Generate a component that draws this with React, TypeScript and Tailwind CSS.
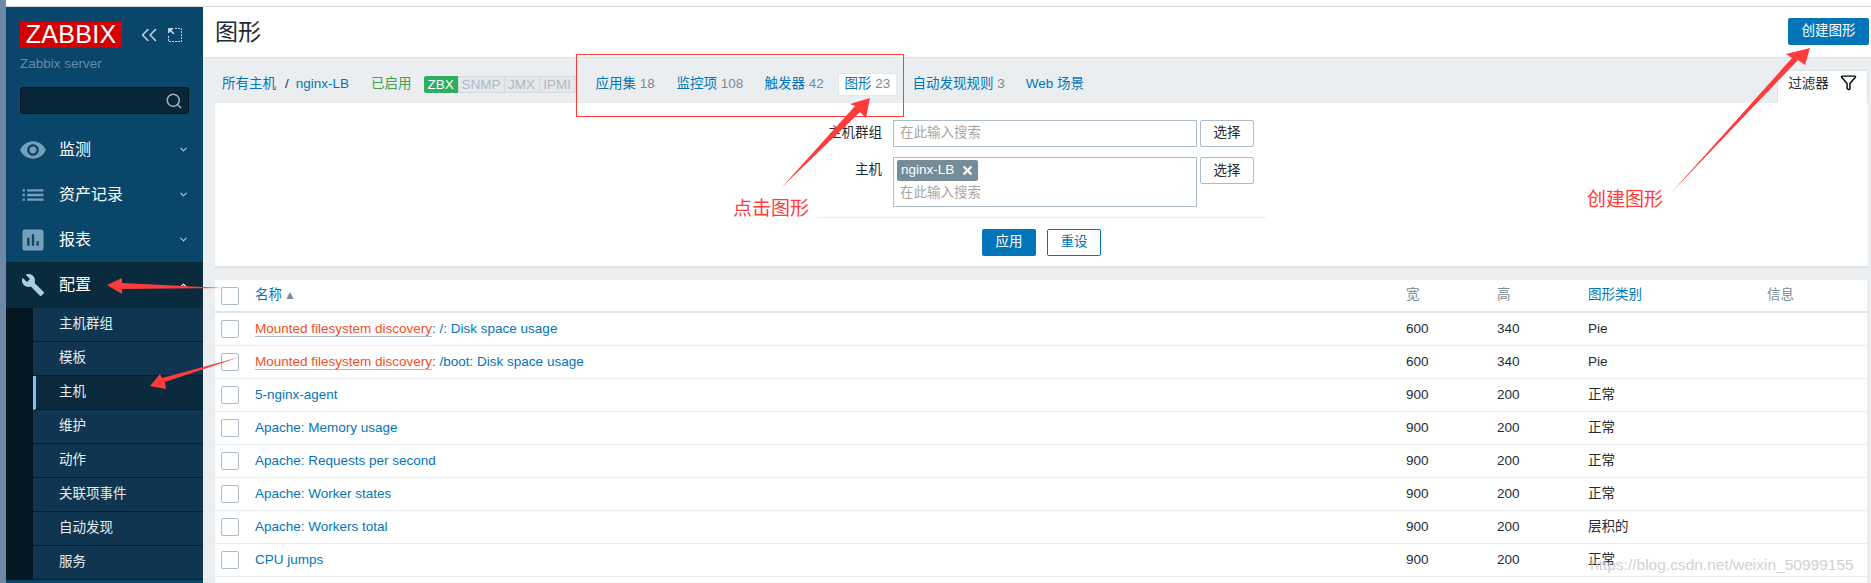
import { ChevronDown, ChevronUp, ChevronsLeft, Filter, Search, X } from 'lucide-react';

const menu = [
  { label: '监测', d: 'M12 4.5C7 4.5 2.73 7.61 1 12c1.73 4.39 6 7.5 11 7.5s9.27-3.11 11-7.5c-1.73-4.39-6-7.5-11-7.5zM12 17c-2.76 0-5-2.24-5-5s2.24-5 5-5 5 2.24 5 5-2.24 5-5 5zm0-8c-1.66 0-3 1.34-3 3s1.34 3 3 3 3-1.34 3-3-1.34-3-3-3z' },
  { label: '资产记录', d: 'M3 13h2v-2H3v2zm0 4h2v-2H3v2zm0-8h2V7H3v2zm4 4h14v-2H7v2zm0 4h14v-2H7v2zM7 7v2h14V7H7z' },
  { label: '报表', d: 'M19 3H5c-1.1 0-2 .9-2 2v14c0 1.1.9 2 2 2h14c1.1 0 2-.9 2-2V5c0-1.1-.9-2-2-2zM9 17H7v-7h2v7zm4 0h-2V7h2v10zm4 0h-2v-4h2v4z' },
];

const subMenu = ['主机群组', '模板', '主机', '维护', '动作', '关联项事件', '自动发现', '服务'];

const tabs = [
  { label: '应用集', count: '18', w: 'w-[81px]' },
  { label: '监控项', count: '108', w: 'w-[88px]' },
  { label: '触发器', count: '42', w: 'w-[74px]' },
];

const rows = [
  { prefix: 'Mounted filesystem discovery', name: ': /: Disk space usage', w: '600', h: '340', type: 'Pie' },
  { prefix: 'Mounted filesystem discovery', name: ': /boot: Disk space usage', w: '600', h: '340', type: 'Pie' },
  { name: '5-nginx-agent', w: '900', h: '200', type: '正常' },
  { name: 'Apache: Memory usage', w: '900', h: '200', type: '正常' },
  { name: 'Apache: Requests per second', w: '900', h: '200', type: '正常' },
  { name: 'Apache: Worker states', w: '900', h: '200', type: '正常' },
  { name: 'Apache: Workers total', w: '900', h: '200', type: '层积的' },
  { name: 'CPU jumps', w: '900', h: '200', type: '正常' },
];

const Icon = ({ d, className }: { d: string; className: string }) => (
  <svg viewBox="0 0 24 24" className={className} fill="currentColor">
    <path d={d} />
  </svg>
);

const Checkbox = () => <span className="h-[18px] w-[18px] shrink-0 rounded-[2px] border border-[#acbbc7] bg-white" />;

const Sidebar = () => (
  <aside className="flex h-full w-[197px] shrink-0 flex-col bg-[#0a466a]">
    <div className="flex items-center pl-[14px] pt-[14px]">
      <div className="flex h-[27px] w-[102px] items-center justify-center bg-[#d40000] text-[25px] leading-none tracking-[0.3px] text-white">ZABBIX</div>
      <ChevronsLeft size={26} strokeWidth={1.4} className="ml-[14px] text-[#c4d4de]" />
      <svg viewBox="0 0 14 14" className="ml-[6px] h-[14px] w-[14px] text-[#c4d4de]" fill="none" stroke="currentColor">
        <path d="M7 .5h6.5v13H.5V7" strokeDasharray="2 1" />
        <path d="M1 1l5 5" strokeWidth="1.6" />
        <path d="M.5.5h4.5L.5 5z" fill="currentColor" />
      </svg>
    </div>
    <div className="pl-[14px] pt-[7px] text-[13.5px] leading-[17px] text-[#668aa1]">Zabbix server</div>
    <div className="ml-[14px] mt-[15px] flex h-[27px] w-[169px] items-center justify-end rounded-[3px] border border-[#021722] bg-[#082637] pr-[5px]">
      <Search size={18} className="text-[#9db5c4]" />
    </div>
    <nav className="mt-[13px]">
      {menu.map((m) => (
        <div key={m.label} className="flex h-[45px] items-center text-[16px] text-white">
          <span className="flex w-[53px] justify-center">
            <Icon d={m.d} className="h-[28px] w-[28px] text-[#76a0ba]" />
          </span>
          <span>{m.label}</span>
          <ChevronDown size={11} strokeWidth={2.5} className="ml-auto mr-[14px] text-[#b4c8d4]" />
        </div>
      ))}
      <div className="flex h-[46px] items-center bg-[#0a2b3e] text-[16px] text-white">
        <span className="flex w-[53px] justify-center">
          <Icon d="M22.7 19l-9.1-9.1c.9-2.3.4-5-1.5-6.9-2-2-5-2.4-7.4-1.3L9 6 6 9 1.6 4.7C.4 7.1.9 10.1 2.9 12.1c1.9 1.9 4.6 2.4 6.9 1.5l9.1 9.1c.4.4 1 .4 1.4 0l2.3-2.3c.5-.4.5-1.1.1-1.4z" className="h-[24px] w-[24px] text-[#a9d0e6]" />
        </span>
        <span>配置</span>
        <ChevronUp size={11} strokeWidth={2.5} className="ml-auto mr-[14px] text-white" />
      </div>
      <div className="bg-[#041722] pl-[27px]">
        {subMenu.map((s) => (
          <div
            key={s}
            className={`flex h-[34px] items-center border-b border-[#061f2e] text-[13.5px] text-[#e4edf2] ${
              s === '主机' ? 'border-l-[3px] bg-[#0a2b3e] pl-[23px] [border-left-color:#7fc4f0]' : 'bg-[#0f3550] pl-[26px]'
            }`}
          >
            {s}
          </div>
        ))}
      </div>
    </nav>
  </aside>
);

const FilterPanel = () => (
  <div className="mr-[3px] ml-[12px] h-[165px] shrink-0 border-b-2 border-[#dfe4e7] bg-white pt-[17px] text-[13.5px] text-[#1f2c33]">
    <div className="flex">
      <div className="w-[667px] pt-[3px] text-right leading-[20px]">主机群组</div>
      <div className="ml-[11px] flex h-[27px] w-[304px] items-center border border-[#acbbc7] px-[6px] text-[#a6a6a6]">在此输入搜索</div>
      <button className="ml-[3px] h-[27px] w-[54px] rounded-[2px] border border-[#acbbc7] bg-white">选择</button>
    </div>
    <div className="mt-[10px] flex">
      <div className="w-[667px] pt-[3px] text-right leading-[20px]">主机</div>
      <div className="ml-[11px] h-[50px] w-[304px] border border-[#acbbc7] px-[3px] pt-[2px]">
        <div className="flex h-[21px] w-[81px] items-center rounded-[2px] bg-[#768d99] pl-[4px] text-white">
          nginx-LB
          <X size={13} strokeWidth={4.5} className="ml-[7px]" />
        </div>
        <div className="pl-[3px] pt-[4px] leading-[16px] text-[#a6a6a6]">在此输入搜索</div>
      </div>
      <button className="ml-[3px] h-[27px] w-[54px] rounded-[2px] border border-[#acbbc7] bg-white pt-[2px]">选择</button>
    </div>
    <div className="ml-[602px] mt-[10px] w-[449px] border-t border-[#ebeef0]" />
    <div className="ml-[767px] mt-[11px] flex gap-[11px]">
      <button className="h-[27px] w-[54px] rounded-[2px] bg-[#0275b8] text-white">应用</button>
      <button className="h-[27px] w-[54px] rounded-[2px] border border-[#0275b8] bg-white text-[#0275b8]">重设</button>
    </div>
  </div>
);

const GraphTable = () => (
  <div className="ml-[12px] mr-[4px] mt-[12px] flex-1 bg-white text-[13.5px]">
    <div className="flex h-[33px] items-center border-b-2 border-[#dfe4e7] pl-[6px] text-[#768d99]">
      <Checkbox />
      <span className="ml-[16px] w-[1151px] text-[#0275b8]">
        名称<span className="ml-[2px] text-[12px] text-[#768d99]">▲</span>
      </span>
      <span className="w-[91px]">宽</span>
      <span className="w-[91px]">高</span>
      <span className="w-[179px] text-[#0275b8]">图形类别</span>
      <span>信息</span>
    </div>
    {rows.map((r, i) => (
      <div key={i} className="flex h-[33px] items-center border-b border-[#ebeef0] pl-[6px] text-[#1f2c33]">
        <Checkbox />
        <span className="ml-[16px] w-[1151px] text-[#0275b8]">
          {r.prefix && <span className="border-b border-[#acbbc7] text-[#f24f1d]">{r.prefix}</span>}
          {r.name}
        </span>
        <span className="w-[91px]">{r.w}</span>
        <span className="w-[91px]">{r.h}</span>
        <span>{r.type}</span>
      </div>
    ))}
  </div>
);

const Annotations = () => (
  <div className="pointer-events-none absolute inset-0">
    <svg width="1871" height="583" className="absolute left-0 top-0" fill="#ff3b3b">
      <polygon points="107,285 122,278 122,283 223,288 122,289 122,294" />
      <polygon points="150,386 160,374 162,378 240,357 165,382 166,389" />
      <polygon points="870,98 866,118 860,112 782,187 855,106 850,104" />
      <polygon points="1810,48 1805,65 1798,60 1671,193 1792,58 1786,54" />
    </svg>
    <div className="absolute left-[576px] top-[54px] h-[63px] w-[328px] border border-[#ff3b3b]" />
    <div className="absolute left-[733px] top-[197px] text-[19px] leading-[24px] text-[#ff3b3b]">点击图形</div>
    <div className="absolute left-[1587px] top-[188px] text-[19px] leading-[24px] text-[#ff3b3b]">创建图形</div>
    <div className="absolute left-[1590px] top-[555px] text-[15.5px] leading-[20px] text-[#c4c4c4]/80">https://blog.csdn.net/weixin_50999155</div>
  </div>
);

export default function App() {
  return (
    <div className="relative flex h-[583px] w-[1871px] overflow-hidden bg-white font-['Liberation_Sans','Noto_Sans_CJK_SC',sans-serif]">
      <div className="w-[6px] shrink-0 bg-[#6f88a5]" />
      <div className="flex min-w-0 flex-1 flex-col">
        <div className="h-[7px] shrink-0 border-b border-[#d8dbdd] bg-white" />
        <div className="flex min-h-0 flex-1">
          <Sidebar />
          <main className="flex min-w-0 flex-1 flex-col bg-[#ebeef0]">
            <header className="flex h-[51px] shrink-0 items-center justify-between border-b border-[#dfe4e7] bg-white pl-[12px] pr-[2px]">
              <h1 className="text-[23px] font-normal text-[#1f2c33]">图形</h1>
              <button className="mb-[1px] h-[27px] w-[81px] rounded-[2px] bg-[#0275b8] text-[13.5px] text-white">创建图形</button>
            </header>
            <div className="flex h-[45px] shrink-0 items-center pl-[19px] pt-[7px] text-[13.5px] text-[#0275b8]">
              <span>所有主机</span>
              <span className="ml-[9px] text-[#1f2c33]">/</span>
              <span className="ml-[7px]">nginx-LB</span>
              <span className="ml-[22px] text-[#429e47]">已启用</span>
              <span className="ml-[12px] flex h-[17px] w-[152px] text-[13.5px] leading-[17px] text-[#acbbc7]">
                <span className="w-[34px] rounded-l-[2px] bg-[#2fae60] text-center text-white">ZBX</span>
                <span className="w-[47px] border border-[#d5dadd] bg-[#e4e8ea] text-center leading-[15px]">SNMP</span>
                <span className="w-[35px] border-y border-r border-[#d5dadd] bg-[#e4e8ea] text-center leading-[15px]">JMX</span>
                <span className="w-[36px] border-y border-r border-[#d5dadd] bg-[#e4e8ea] text-center leading-[15px]">IPMI</span>
              </span>
              <span className="ml-[20px] flex">
                {tabs.map((t) => (
                  <span key={t.label} className={t.w}>
                    {t.label} <span className="text-[#768d99]">{t.count}</span>
                  </span>
                ))}
              </span>
              <span className="ml-[-1px] flex h-[23px] w-[59px] items-center rounded-[2px] border border-[#e3e7ea] bg-white pl-[6px]">
                图形&nbsp;<span className="text-[#768d99]">23</span>
              </span>
              <span className="ml-[16px]">
                自动发现规则 <span className="text-[#768d99]">3</span>
              </span>
              <span className="ml-[21px]">Web 场景</span>
              <span className="ml-auto mr-[3px] mt-[5px] flex h-[33px] w-[91px] items-start justify-center gap-[11px] border-x border-t border-[#dfe4e7] bg-white pt-[3px] text-[13.5px] text-[#1f2c33]">
                过滤器
                <Filter size={17} strokeWidth={2} className="text-black" />
              </span>
            </div>
            <FilterPanel />
            <GraphTable />
          </main>
        </div>
      </div>
      <Annotations />
    </div>
  );
}
